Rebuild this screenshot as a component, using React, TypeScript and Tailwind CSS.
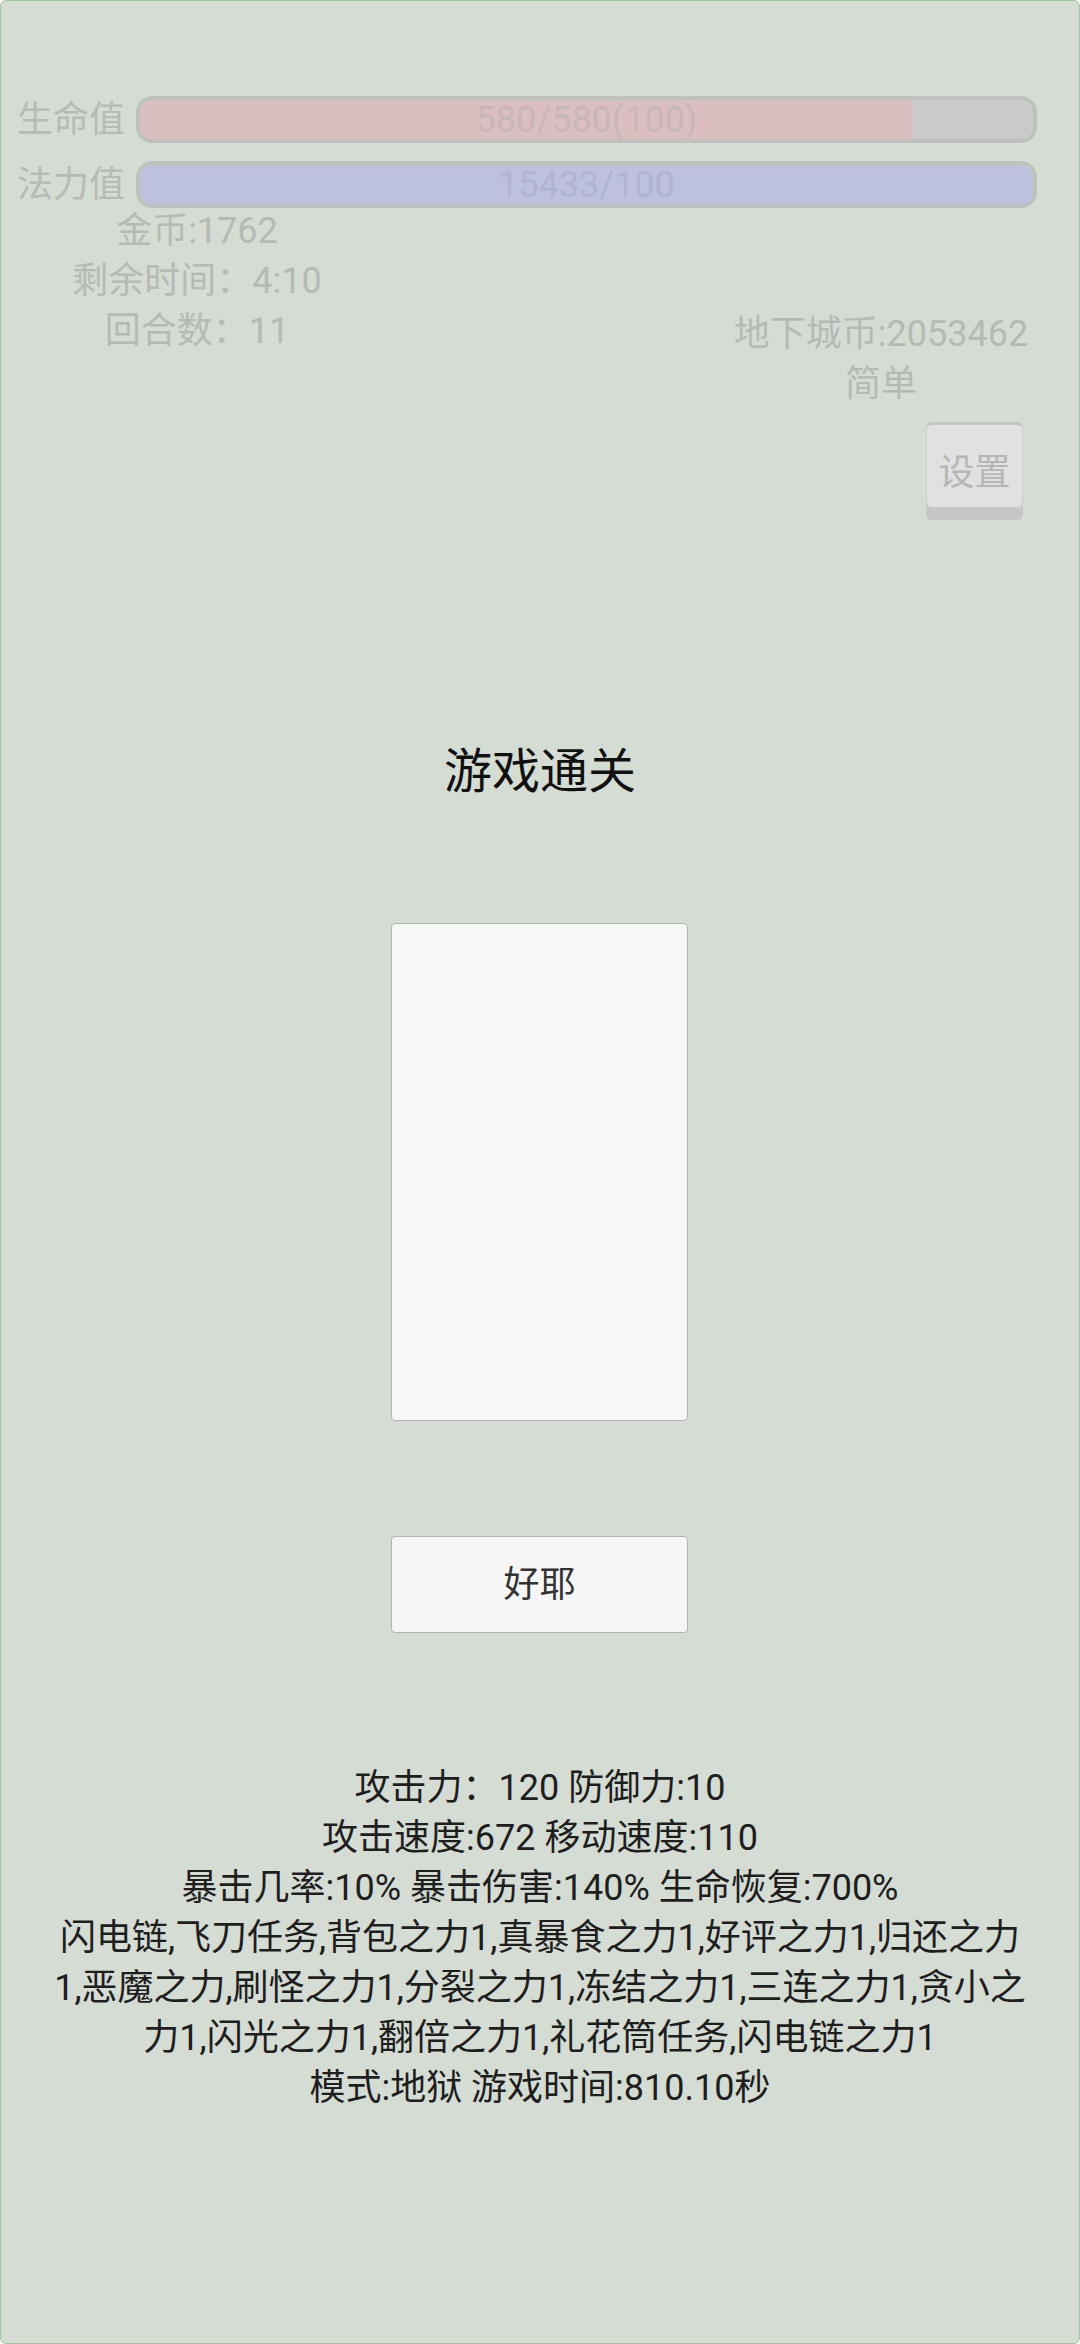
import React from "react";

const font = { fontFamily: 'Roboto, "Noto Sans CJK SC", sans-serif' };

function Bar({ label, pct, fill, text, textColor }: { label: string; pct: number; fill: string; text: string; textColor: string }) {
  return (
    <div className="flex items-center h-[47px]">
      <div className="w-[135px] pl-[16px] text-[36px] leading-none text-[#b7bbb6] whitespace-nowrap">{label}</div>
      <div className="relative flex-1 mr-[42px] h-[47px] rounded-[16px] border-[4px] border-[#bfc1bf] bg-[#c9cac9] overflow-hidden">
        <div className={`h-full ${fill}`} style={{ width: `${pct}%` }} />
        <div className={`absolute inset-0 flex items-center justify-center text-[36px] leading-none ${textColor}`}>{text}</div>
      </div>
    </div>
  );
}

export default function App() {
  const lines = [
    "攻击力：120 防御力:10",
    "攻击速度:672 移动速度:110",
    "暴击几率:10% 暴击伤害:140% 生命恢复:700%",
    "闪电链,飞刀任务,背包之力1,真暴食之力1,好评之力1,归还之力",
    "1,恶魔之力,刷怪之力1,分裂之力1,冻结之力1,三连之力1,贪小之",
    "力1,闪光之力1,翻倍之力1,礼花筒任务,闪电链之力1",
    "模式:地狱 游戏时间:810.10秒",
  ];
  return (
    <div style={font} className="w-[1080px] h-[2344px] bg-[#d5dcd4] border border-[#a3c4a3] rounded-[6px] overflow-hidden">
      <div className="pt-[95px] flex flex-col gap-[18px]">
        <Bar label="生命值" pct={86.4} fill="bg-[#dbbfc0]" text="580/580(100)" textColor="text-[#c9b7b8]" />
        <Bar label="法力值" pct={100} fill="bg-[#bec1dd]" text="15433/100" textColor="text-[#b1b4cf]" />
      </div>

      <div className="flex mt-[-2px]">
        <div className="w-[392px] flex flex-col items-center text-[36px] leading-[50px] text-[#b6bab5]">
          <div>金币:1762</div>
          <div>剩余时间：4:10</div>
          <div>回合数：11</div>
        </div>
        <div className="ml-auto mr-[48px] w-[300px] flex flex-col items-center pt-[103px] text-[36px] leading-[50px] text-[#b6bab5]">
          <div>地下城币:2053462</div>
          <div>简单</div>
          <button className="self-end mr-[8px] mt-[13px] w-[97px] h-[98px] rounded-[6px] bg-[#c5c7c5] pb-[12px]">
            <div className="h-full rounded-[6px] bg-[#e0e1e0] border border-[#cdcfcd] border-t-[#c4c6c4] border-t-[3px] pt-[14px] flex items-center justify-center text-[36px] leading-none text-[#b5b7b5]">
              设置
            </div>
          </button>
        </div>
      </div>

      <div className="mt-[220px] flex flex-col items-center">
        <div className="text-[48px] leading-[64px] text-[#111111]">游戏通关</div>
        <div className="mt-[119px] ml-[-1px] w-[297px] h-[498px] bg-[#f7f7f7] border border-[#b3b3b3] rounded-[4px]" />
        <button className="mt-[115px] ml-[-1px] w-[297px] h-[97px] bg-[#f6f6f6] border border-[#b3b3b3] rounded-[4px] text-[36px] text-[#333333]">
          好耶
        </button>
        <div className="mt-[130px] flex flex-col items-center text-[36px] leading-[50px] text-[#1e1e1e]">
          {lines.map((l, i) => (
            <div key={i} className="whitespace-nowrap">{l}</div>
          ))}
        </div>
      </div>
    </div>
  );
}
